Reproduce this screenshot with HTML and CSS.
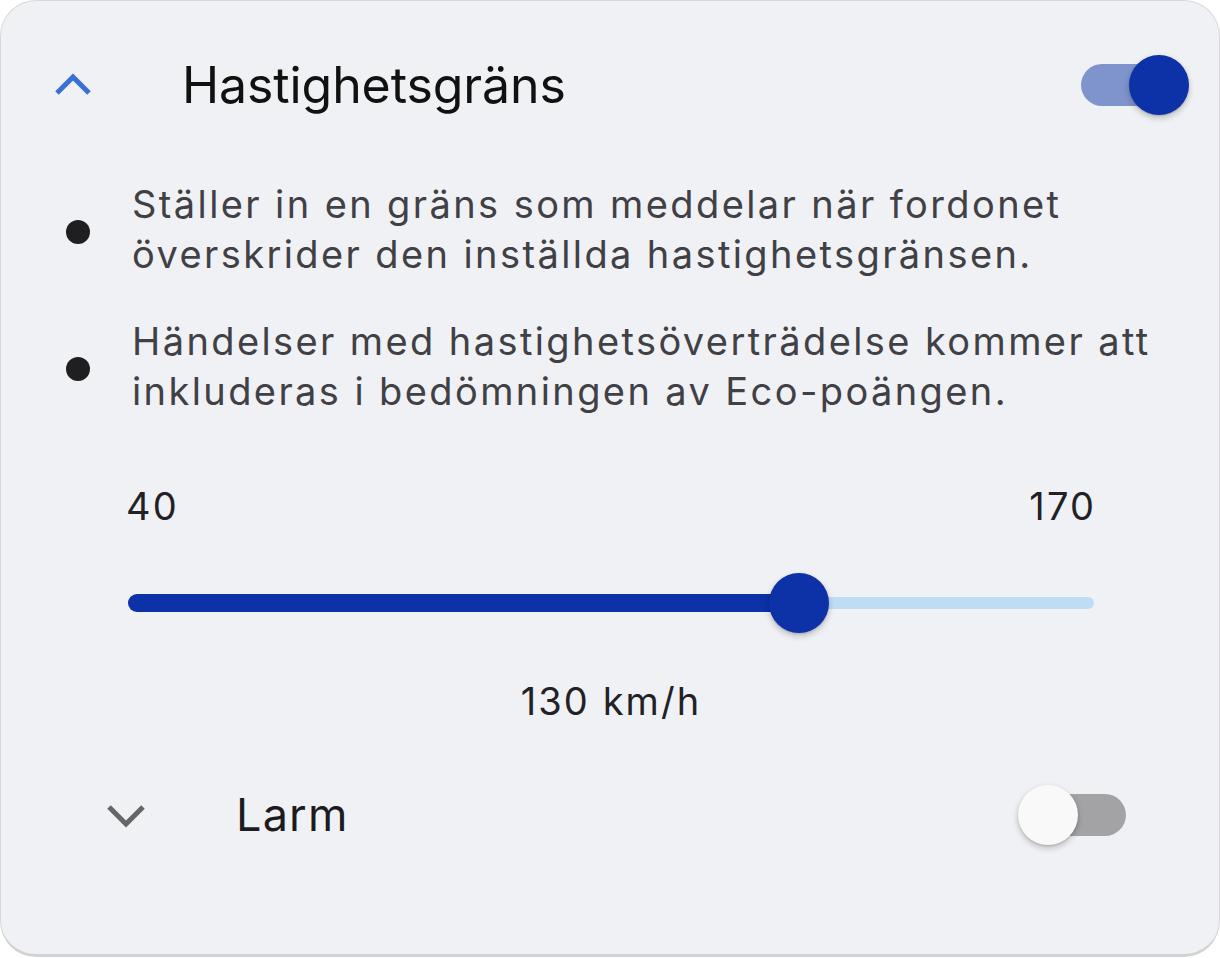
FILE: index.html
```html
<!DOCTYPE html>
<html lang="sv">
<head>
<meta charset="utf-8">
<title>Hastighetsgräns</title>
<link rel="stylesheet" href="styles.css">
</head>
<body>
<div class="card">
  <div class="row row-main">
    <span class="chev">
      <svg width="48" height="48" viewBox="0 0 48 48"><polyline points="8,32 24,16 40,32" fill="none" stroke="#3a6fd6" stroke-width="5"/></svg>
    </span>
    <span class="title">Hastighetsgräns</span>
    <span class="switch on"><span class="track"></span><span class="thumb"></span></span>
  </div>

  <ul class="bullets">
    <li><span class="dot"></span><p>Ställer in en gräns som meddelar när fordonet överskrider den inställda hastighetsgränsen.</p></li>
    <li><span class="dot"></span><p>Händelser med hastighetsöverträdelse kommer att inkluderas i bedömningen av Eco-poängen.</p></li>
  </ul>

  <div class="range">
    <div class="range-labels"><span>40</span><span>170</span></div>
    <div class="slider">
      <span class="rail"></span>
      <span class="fill" style="width: 69.5%"></span>
      <span class="knob" style="left: 69.5%"></span>
    </div>
    <div class="value">130 km/h</div>
  </div>

  <div class="row row-sub">
    <span class="chev">
      <svg width="48" height="48" viewBox="0 0 48 48"><polyline points="7,16 24,33 41,16" fill="none" stroke="#666" stroke-width="5"/></svg>
    </span>
    <span class="subtitle">Larm</span>
    <span class="switch off"><span class="track"></span><span class="thumb"></span></span>
  </div>
</div>
</body>
</html>
```

FILE: styles.css
```css
* { box-sizing: border-box; }

html, body {
  margin: 0;
  padding: 0;
  background: #ffffff;
}

body {
  font-family: Inter, "Noto Sans", sans-serif;
  width: 1220px;
  height: 958px;
}

.card {
  width: 1220px;
  height: 957px;
  background: #f0f1f5;
  border: 1.5px solid #d8d8dc;
  border-bottom: 3px solid #d2d2d6;
  border-radius: 36px;
  display: flex;
  flex-direction: column;
}

.row {
  display: flex;
  align-items: center;
  height: 60px;
}

.row-main {
  margin-top: 54px;
  padding-left: 48px;
  padding-right: 30px;
}

.chev {
  width: 48px;
  height: 48px;
  display: flex;
}

.title {
  flex: 1;
  margin-left: 85px;
  font-size: 50px;
  line-height: 60px;
  color: #111111;
  letter-spacing: -0.1px;
}

.switch {
  position: relative;
  width: 108px;
  height: 60px;
  flex: none;
}

.switch .track {
  position: absolute;
  top: 9px;
  width: 92px;
  height: 42px;
  border-radius: 21px;
}

.switch .thumb {
  position: absolute;
  top: 0;
  width: 60px;
  height: 60px;
  border-radius: 50%;
  box-shadow: 0 3px 6px rgba(0, 0, 0, 0.22), 0 1px 2px rgba(0, 0, 0, 0.12);
}

.switch.on .track { left: 0; background: #7f94cc; }
.switch.on .thumb { right: 0; background: #0d31a6; }
.switch.off .track { right: 0; background: #a3a3a6; }
.switch.off .thumb { left: 0; background: #f9f9f9; }

.bullets {
  list-style: none;
  margin: 64px 0 0 0;
  padding: 0 44px 0 65px;
  display: flex;
  flex-direction: column;
  gap: 37px;
}

.bullets li {
  display: flex;
  align-items: center;
}

.dot {
  width: 24px;
  height: 24px;
  border-radius: 50%;
  background: #1f1f22;
  flex: none;
  margin-top: 6px;
}

.bullets p {
  margin: 0 0 0 42px;
  font-size: 38px;
  line-height: 50px;
  color: #404045;
  letter-spacing: 2.4px;
}

.range {
  margin: 65px 0 0 127px;
  width: 966px;
  display: flex;
  flex-direction: column;
}

.range-labels {
  display: flex;
  justify-content: space-between;
  font-size: 38px;
  line-height: 50px;
  color: #222226;
  letter-spacing: 2.1px;
  margin-left: -2px;
  margin-right: -2px;
}

.slider {
  position: relative;
  height: 60px;
  margin-top: 42px;
}

.slider .rail {
  position: absolute;
  left: 0;
  right: 0;
  top: 24px;
  height: 12px;
  border-radius: 6px;
  background: #bfdcf5;
}

.slider .fill {
  position: absolute;
  left: 0;
  top: 21px;
  height: 18px;
  border-radius: 9px 0 0 9px;
  background: #0d31a6;
}

.slider .knob {
  position: absolute;
  top: 0;
  width: 60px;
  height: 60px;
  margin-left: -30px;
  border-radius: 50%;
  background: #0d31a6;
  box-shadow: 0 3px 6px rgba(0, 0, 0, 0.22), 0 1px 2px rgba(0, 0, 0, 0.12);
}

.value {
  margin-top: 43px;
  text-align: center;
  font-size: 38px;
  line-height: 50px;
  color: #222226;
  letter-spacing: 2.1px;
}

.row-sub {
  margin-top: 59px;
  padding-left: 101px;
  padding-right: 93px;
}

.subtitle {
  flex: 1;
  margin-left: 86px;
  font-size: 45px;
  line-height: 60px;
  color: #1c1c1f;
  letter-spacing: 1.2px;
}
```
